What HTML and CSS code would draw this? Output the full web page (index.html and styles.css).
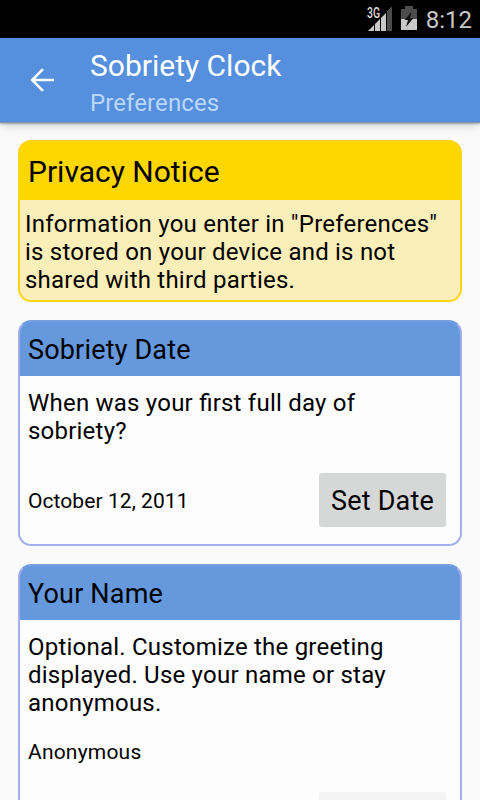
FILE: index.html
```html
<!DOCTYPE html>
<html lang="en">
<head>
  <meta charset="UTF-8">
  <meta name="viewport" content="width=device-width, initial-scale=1.0">
  <title>Sobriety Clock</title>
  <link rel="stylesheet" href="styles.css">
</head>
<body>

  <!-- Status bar -->
  <div class="status-bar">
    <svg class="signal" width="27" height="26" viewBox="0 0 27 26">
      <path d="M2 25L26 1V25Z" fill="#c8c8c8"/>
      <path d="M21 6L26 1V25H21Z" fill="#4c4c4c"/>
      <path d="M8.500 0V25M14.500 0V25" stroke="#000" stroke-width="1"/>
      <path d="M20.500 0V25" stroke="#000" stroke-width="1"/>
      <path d="M0 0H14.500V13H0Z" fill="#000"/>
      <text class="network" x="1" y="12" textLength="13" lengthAdjust="spacingAndGlyphs">3G</text>
    </svg>
    <svg class="battery" width="16" height="24" viewBox="0 0 16 24">
      <path d="M0 3H4V0H12V3H16V24H0Z" fill="#4c4c4c"/>
      <path d="M0 13H16V24H0Z" fill="#c8c8c8"/>
      <path d="M10.500 6L3.500 14H7L5 21L12.500 12H9Z" fill="#111"/>
    </svg>
    <span class="time">8:12</span>
  </div>

  <header class="toolbar">
    <svg class="back" width="26" height="26" viewBox="0 0 26 26" fill="none" stroke="#fff" stroke-width="2.600">
      <path d="M25 13H3.500M14 2.200L3.200 13L14 23.800"/>
    </svg>
    <div class="titles">
      <h1>Sobriety Clock</h1>
      <p class="subtitle">Preferences</p>
    </div>
  </header>

  <main class="content">
    <section class="card notice">
      <h2>Privacy Notice</h2>
      <p>Information you enter in "Preferences" is stored on your device and is not shared with third parties.</p>
    </section>

    <section class="card">
      <h2>Sobriety Date</h2>
      <p>When was your first full day of sobriety?</p>
      <div class="row">
        <span class="value">October 12, 2011</span>
        <button class="btn">Set Date</button>
      </div>
    </section>

    <section class="card">
      <h2>Your Name</h2>
      <p>Optional. Customize the greeting displayed. Use your name or stay anonymous.</p>
      <div class="name">Anonymous</div>
      <div class="row name-row">
        <button class="btn btn-disabled" disabled></button>
      </div>
    </section>
  </main>

</body>
</html>
```
FILE: styles.css
```css
* {
  box-sizing: border-box;
}

body {
  margin: 0;
  height: 800px;
  overflow: hidden;
  display: flex;
  flex-direction: column;
  background: #fafafa;
  color: #000;
  font-family: Roboto, sans-serif;
}

h1, h2, p {
  margin: 0;
  font-weight: 400;
}

/* Status bar */
.status-bar {
  flex: none;
  height: 38px;
  padding-right: 8px;
  display: flex;
  align-items: center;
  justify-content: flex-end;
  background: #000;
}
.signal {
  margin: -1px 8px 0 0;
}
.network {
  font-size: 14px;
  font-weight: 500;
  fill: #dcdcdc;
}
.battery {
  margin: -2px 9px 0 0;
}
.time {
  margin-top: 2px;
  font-size: 24px;
  color: #c8c8c8;
}

/* Toolbar */
.toolbar {
  flex: none;
  height: 85px;
  padding: 10px 29px 0;
  display: flex;
  gap: 35px;
  background: #558fdd;
  border-bottom: 1px solid #7f93b0;
  box-shadow: 0 1px 2px rgba(0, 0, 0, 0.3), 0 3px 10px rgba(0, 0, 0, 0.15);
}
.back {
  margin-top: 19px;
}
h1 {
  font-size: 30px;
  line-height: 36px;
  color: #fff;
}
.subtitle {
  margin-top: 5px;
  font-size: 24px;
  line-height: 28px;
  letter-spacing: 0.1px;
  color: #bbd8fb;
}

/* Cards */
.content {
  min-height: 0;
  padding: 17px 18px 0;
  display: flex;
  flex-direction: column;
  gap: 18px;
  overflow: hidden;
}
.card {
  flex: none;
  border: 2px solid #a3afee;
  border-top-color: #759de0;
  border-radius: 13px;
  background: linear-gradient(#6698dd, #6698dd) top / 100% 54px no-repeat #fdfdfd;
}
.card h2 {
  height: 54px;
  padding-left: 8px;
  font-size: 27px;
  line-height: 56px;
  letter-spacing: 0.17px;
}
.card p {
  padding: 13px 8px 0;
  font-size: 24px;
  line-height: 28px;
  letter-spacing: 0.22px;
  font-feature-settings: "liga" 1;
}
.card.notice {
  height: 162px;
  border-color: #fcd514;
  background: linear-gradient(#ffd700, #ffd700) top / 100% 58px no-repeat #faefb8;
}
.notice h2 {
  height: 58px;
  font-size: 30px;
  line-height: 60px;
  letter-spacing: 0;
}
.notice p {
  padding: 10px 5px 0;
}
.row {
  margin: 28px 14px 17px 8px;
  display: flex;
  align-items: center;
  justify-content: space-between;
}
.value, .name {
  font-size: 21px;
  letter-spacing: 0.07px;
}
.value {
  padding-top: 2px;
}
.name {
  margin: 21px 8px 0;
  line-height: 28px;
  letter-spacing: 0.2px;
}
.name-row {
  margin-top: 26px;
  justify-content: flex-end;
}

.btn {
  width: 127px;
  height: 54px;
  padding: 2px 0 0;
  border: 0;
  border-radius: 3px;
  background: #d6d7d7;
  color: #000;
  font: 27px Roboto, sans-serif;
  letter-spacing: 0.2px;
}
.btn-disabled {
  background: #f3f3f3;
}
```
